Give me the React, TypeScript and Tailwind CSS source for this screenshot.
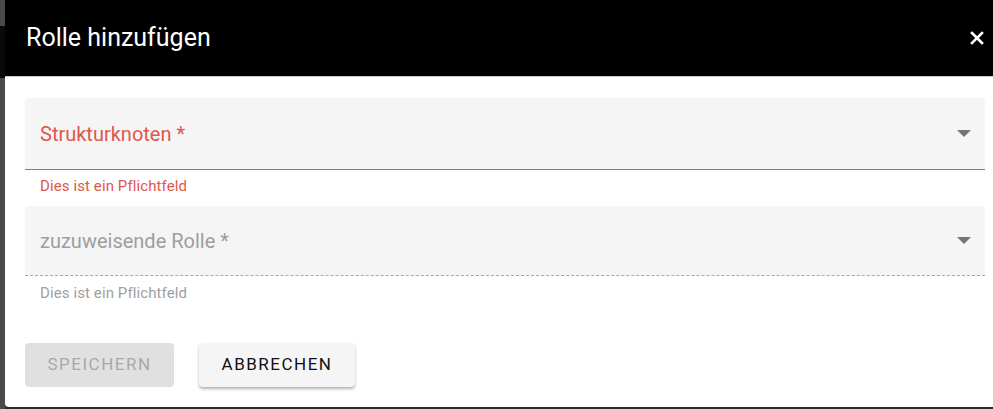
import React from "react";

export default function App() {
  return (
    <div className="w-[993px] h-[409px] flex bg-[#3a3a3a] overflow-hidden" style={{ fontFamily: "Roboto, 'Liberation Sans', sans-serif" }}>
      <div className="w-[5px] flex flex-col shrink-0">
        <div className="h-[26px] bg-[#4a4a4a]" />
        <div className="h-[52px] bg-[#0a0a0a]" />
        <div className="flex-1 bg-[#4a4a4a]" />
      </div>
      <div className="flex-1 flex flex-col">
        <div className="h-[407px] bg-white rounded-bl-[4px] flex flex-col overflow-hidden">
          <div className="h-[76px] bg-black flex items-center justify-between pl-[21px] pr-[8px] shrink-0">
            <span className="text-white text-[25px] leading-none pb-[2px]">Rolle hinzufügen</span>
            <svg width="14" height="14" viewBox="0 0 14 14" className="mr-[1px]">
              <path d="M2 2 L12 12 M12 2 L2 12" stroke="white" strokeWidth="2.6" strokeLinecap="square" />
            </svg>
          </div>
          <div className="h-px bg-[#c8c8c8]" />
          <div className="pl-[20px] pr-[8px] pt-[21px] flex flex-col">
            <div className="h-[71px] bg-[#f5f5f5] rounded-t-[4px] flex items-center justify-between pl-[15px] pr-[14px]">
              <span className="text-[20px] text-[#e0574b] pt-[1px]">Strukturknoten *</span>
              <svg width="14" height="8" viewBox="0 0 14 8"><path d="M0 0 L14 0 L7 7 Z" fill="#757575" /></svg>
            </div>
            <div className="h-px bg-[#e0574b]" />
            <div className="pl-[15px] pt-[6px] h-[36px] text-[15px] leading-[20px] tracking-[0.1px] text-[#e0574b]">Dies ist ein Pflichtfeld</div>
            <div className="h-[70px] bg-[#f5f5f5] rounded-t-[4px] border-b border-dashed border-[#a8a8a8] flex items-center justify-between pl-[15px] pr-[14px]">
              <span className="text-[20px] text-[#9e9e9e]">zuzuweisende Rolle *</span>
              <svg width="14" height="8" viewBox="0 0 14 8"><path d="M0 0 L14 0 L7 7 Z" fill="#757575" /></svg>
            </div>
            <div className="pl-[15px] pt-[7px] h-[36px] text-[15px] leading-[20px] tracking-[0.1px] text-[#a0a0a0]">Dies ist ein Pflichtfeld</div>
            <div className="flex gap-[25px] mt-[31px]">
              <button className="w-[149px] h-[44px] rounded-[4px] bg-[#e0e0e0] text-[#a8a8a8] text-[17px] tracking-[1.5px]">SPEICHERN</button>
              <button className="w-[156px] h-[44px] rounded-[4px] bg-[#f5f5f5] text-[#111] text-[17px] tracking-[1.5px] shadow-[0_2px_3px_rgba(0,0,0,0.3)]">ABBRECHEN</button>
            </div>
          </div>
        </div>
        <div className="flex-1 bg-[#2a2a2a]" />
      </div>
    </div>
  );
}
